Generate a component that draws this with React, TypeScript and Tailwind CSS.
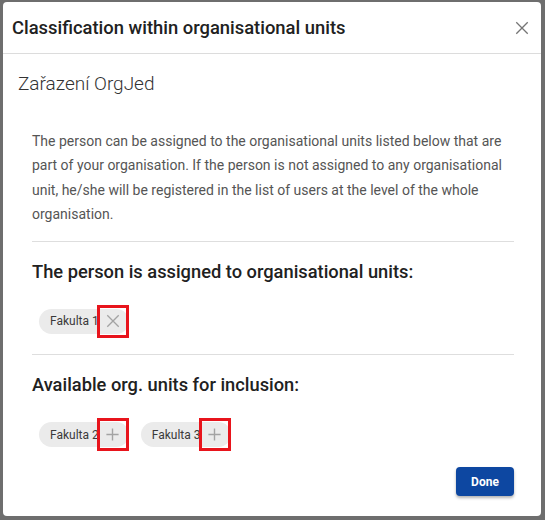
import React from 'react';

const font = { fontFamily: 'Roboto, "Noto Sans", sans-serif' };

function CloseIcon({ className = '' }: { className?: string }) {
  return (
    <svg viewBox="0 0 16 16" className={className} fill="none" stroke="currentColor" strokeWidth="1.5" strokeLinecap="square">
      <path d="M2 2L14 14M14 2L2 14" />
    </svg>
  );
}

function PlusIcon({ className = '' }: { className?: string }) {
  return (
    <svg viewBox="0 0 16 16" className={className} fill="none" stroke="currentColor" strokeWidth="1.5">
      <path d="M8 1.5V14.5M1.5 8H14.5" />
    </svg>
  );
}

function Chip({ label, kind }: { label: string; kind: 'remove' | 'add' }) {
  return (
    <span className="inline-flex h-[25px] items-center rounded-full bg-[#ebebeb] pl-[11px] text-[12px] text-[#3a3a3a]">
      <span>{label}</span>
      <span className="-ml-[2px] flex h-[33px] w-[32px] items-center justify-center border-[3px] border-[#e8141c]">
        {kind === 'remove' ? (
          <CloseIcon className="h-[14px] w-[14px] text-[#a3a3a3]" />
        ) : (
          <PlusIcon className="h-[15px] w-[15px] text-[#a3a3a3]" />
        )}
      </span>
    </span>
  );
}

export default function App() {
  return (
    <div className="h-[520px] w-[545px] bg-[#6e6e6e] pl-[3px] pt-[2px]" style={font}>
      <div className="flex h-[514px] w-[538px] flex-col rounded-[4px] bg-white">
        <div className="flex h-[52px] items-center justify-between border-b border-[#dcdcdc] pl-[9px] pr-[12px]">
          <h1 className="text-[18.4px] font-medium text-[#212121]">Classification within organisational units</h1>
          <CloseIcon className="h-[14px] w-[14px] text-[#757575]" />
        </div>

        <div className="pl-[15px] pt-[16px] text-[19px] font-light text-[#333]">Zařazení OrgJed</div>

        <div className="px-[29px] pr-[27px] pt-[30px]">
          <p className="text-[14px] leading-[24.5px] text-[#555]">
            The person can be assigned to the organisational units listed below that are part of your organisation. If the
            person is not assigned to any organisational unit, he/she will be registered in the list of users at the level of
            the whole organisation.
          </p>
          <div className="mt-[14px] border-t border-[#dedede]" />

          <h2 className="mt-[16px] text-[18.3px] font-medium text-[#212121]">The person is assigned to organisational units:</h2>
          <div className="mt-[24px] flex gap-[12px] pl-[7px]">
            <Chip label="Fakulta 1" kind="remove" />
          </div>
          <div className="mt-[20px] border-t border-[#dedede]" />

          <h2 className="mt-[16px] text-[18.3px] font-medium text-[#212121]">Available org. units for inclusion:</h2>
          <div className="mt-[24px] flex gap-[12px] pl-[7px]">
            <Chip label="Fakulta 2" kind="add" />
            <Chip label="Fakulta 3" kind="add" />
          </div>

          <div className="mt-[20px] flex justify-end">
            <button className="h-[29px] w-[58px] rounded-[4px] bg-[#0d47a1] text-[12px] font-bold text-white shadow-[0_2px_3px_rgba(0,0,0,0.3)]">
              Done
            </button>
          </div>
        </div>
      </div>
    </div>
  );
}
